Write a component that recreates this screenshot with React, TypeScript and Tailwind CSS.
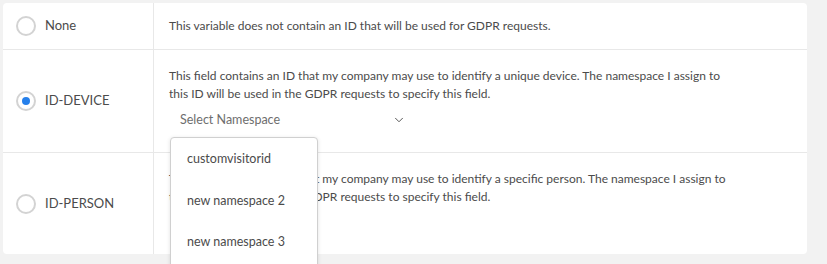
import { ChevronDown } from "lucide-react";

const Radio = ({ checked }: { checked?: boolean }) => (
  <span className="w-5 h-5 rounded-full border-2 border-[#d3d3d3] bg-white flex items-center justify-center shrink-0">
    {checked && <span className="w-2 h-2 rounded-full bg-[#2680eb]" />}
  </span>
);

const App = () => {
  return (
    <div
      className="w-[827px] h-[264px] bg-[#f2f2f2] pt-[3px] pl-[3px] overflow-hidden text-[12px] text-[#4b4b4b]"
      style={{ fontFamily: "Lato, 'Open Sans', sans-serif" }}
    >
      <div className="w-[804px] h-[251px] bg-white rounded-[4px] flex flex-col relative">
        {/* None */}
        <div className="flex h-[47px] border-b border-[#e8e8e8]">
          <div className="w-[151px] flex items-center gap-[9px] pl-[13px] border-r border-[#e8e8e8]">
            <Radio />
            <span className="text-[13px]">None</span>
          </div>
          <div className="flex items-center pl-[15px]">
            This variable does not contain an ID that will be used for GDPR requests.
          </div>
        </div>

        {/* ID-DEVICE */}
        <div className="flex h-[103px] border-b border-[#e8e8e8]">
          <div className="w-[151px] flex items-center gap-[9px] pl-[13px] border-r border-[#e8e8e8]">
            <Radio checked />
            <span className="text-[13px]">ID-DEVICE</span>
          </div>
          <div className="pl-[15px] pt-[17px] leading-[18px]">
            This field contains an ID that my company may use to identify a unique device. The namespace I assign to
            <br />
            this ID will be used in the GDPR requests to specify this field.
            <div className="w-[247px] flex items-center justify-between pl-[11px] pr-[10px] mt-[8px] text-[#6e6e6e] text-[12.5px]">
              <span>Select Namespace</span>
              <ChevronDown size={14} strokeWidth={1.6} className="text-[#4b4b4b]" />
            </div>
          </div>
        </div>

        {/* ID-PERSON */}
        <div className="flex flex-1">
          <div className="w-[151px] flex items-center gap-[9px] pl-[13px] border-r border-[#e8e8e8]">
            <Radio />
            <span className="text-[13px]">ID-PERSON</span>
          </div>
          <div className="pl-[15px] pt-[17px] leading-[18px]">
            This field contains an ID that my company may use to identify a specific person. The namespace I assign to
            <br />
            this ID will be used in the GDPR requests to specify this field.
          </div>
        </div>

        {/* namespace menu */}
        <div className="absolute left-[167px] top-[134px] w-[148px] h-[140px] bg-white border border-[#d0d0d0] rounded-[4px] shadow-[0_1px_4px_rgba(0,0,0,0.12)] pt-[11px] text-[12.5px] text-[#4b4b4b]">
          <div className="h-[42px] pl-[16px] leading-[20px]">customvisitorid</div>
          <div className="h-[41px] pl-[16px] leading-[20px]">new namespace 2</div>
          <div className="h-[42px] pl-[16px] leading-[20px]">new namespace 3</div>
        </div>
      </div>
    </div>
  );
};

export default App;
